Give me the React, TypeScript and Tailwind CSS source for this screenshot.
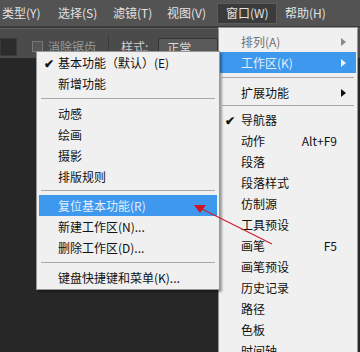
import React from 'react';

type Entry =
  | { sep: true; cls?: string }
  | { label: string; check?: boolean; active?: boolean; disabled?: boolean; sub?: boolean; key?: string };

const leftItems: Entry[] = [
  { label: '基本功能（默认）(E)', check: true },
  { label: '新增功能' },
  { sep: true },
  { label: '动感' },
  { label: '绘画' },
  { label: '摄影' },
  { label: '排版规则' },
  { sep: true, cls: 'mt-[3px] mb-[4px]' },
  { label: '复位基本功能(R)', active: true },
  { label: '新建工作区(N)...' },
  { label: '删除工作区(D)...' },
  { sep: true },
  { label: '键盘快捷键和菜单(K)...' },
];

const rightItems: Entry[] = [
  { label: '排列(A)', disabled: true, sub: true },
  { label: '工作区(K)', active: true, sub: true },
  { sep: true },
  { label: '扩展功能', sub: true },
  { sep: true, cls: 'mt-[2px] mb-[3px]' },
  { label: '导航器', check: true },
  { label: '动作', key: 'Alt+F9' },
  { label: '段落' },
  { label: '段落样式' },
  { label: '仿制源' },
  { label: '工具预设' },
  { label: '画笔', key: 'F5' },
  { label: '画笔预设' },
  { label: '历史记录' },
  { label: '路径' },
  { label: '色板' },
  { label: '时间轴' },
];

const menubar = [
  { t: '类型(Y)', w: 'w-[56px]' },
  { t: '选择(S)', w: 'w-[55px]' },
  { t: '滤镜(T)', w: 'w-[54px]' },
  { t: '视图(V)', w: 'w-[50px]' },
];

function Arrow({ color }: { color: string }) {
  return (
    <svg width="5" height="8" viewBox="0 0 5 8" className="shrink-0">
      <path d="M0 0 L5 4 L0 8 Z" fill={color} />
    </svg>
  );
}

function MenuRows({ items, textPad }: { items: Entry[]; textPad: string }) {
  return (
    <>
      {items.map((it, i) => {
        if ('sep' in it) {
          return <div key={i} className={`h-px bg-[#a8a8a8] mx-[2px] ${it.cls ?? 'my-[4px]'}`} />;
        }
        const text = it.active ? 'text-[#e6eefa]' : it.disabled ? 'text-[#707070]' : 'text-[#111]';
        return (
          <div
            key={i}
            className={`relative flex items-center h-[21px] ${textPad} pr-[10px] ${it.active ? 'bg-[#3d98ee]' : ''} ${text}`}
          >
            {it.check && <span className="absolute left-[5px] text-[12px] text-[#111] font-bold">✔</span>}
            <span className="flex-1 whitespace-nowrap">{it.label}</span>
            {it.key && <span className="whitespace-nowrap mr-[9px]">{it.key}</span>}
            {it.sub && <Arrow color={it.active ? '#eef4fc' : it.disabled ? '#8a8a8a' : '#111'} />}
          </div>
        );
      })}
    </>
  );
}

export default function App() {
  return (
    <div className="relative w-[360px] h-[352px] overflow-hidden bg-[#272727] font-['Noto_Sans_CJK_SC',sans-serif] text-[12px] leading-none">
      {/* menu bar */}
      <div className="h-[28px] bg-[#535353] border-b-2 border-[#3a3a3a] flex items-center text-[#e2e2e2] pl-[2px]">
        {menubar.map((m) => (
          <div key={m.t} className={m.w}>
            {m.t}
          </div>
        ))}
        <div className="w-[60px] h-[21px] pl-[8px] flex items-center bg-[#3b3b3b] border border-[#5c5c5c]">窗口(W)</div>
        <div className="ml-[8px]">帮助(H)</div>
      </div>

      {/* options bar */}
      <div className="h-[30px] bg-[#4b4b4b] border-t border-[#5e5e5e] flex items-center text-[#9a9a9a]">
        <div className="w-[17px] h-[18px] bg-[#2c2c2c] border border-[#3a3a3a] mt-[6px]" />
        <div className="ml-[15px] w-[11px] h-[11px] border border-[#777] bg-[#555] mt-[6px]" />
        <span className="ml-[5px] mt-[6px]">消除锯齿</span>
        <div className="ml-[12px] w-px h-[22px] bg-[#3a3a3a] mt-[6px]" />
        <span className="ml-[12px] mt-[6px] text-[#d0d0d0]">样式:</span>
        <div className="ml-[10px] w-[60px] h-[20px] bg-[#5a5a5a] border border-[#333] mt-[8px] pl-[8px] pt-[3px] text-[#ddd]">正常</div>
      </div>

      {/* 窗口 menu */}
      <div className="absolute left-[218px] top-[27px] w-[140px] h-[340px] bg-[#f0f0f0] border border-[#979797] pt-[3px] px-px">
        <MenuRows items={rightItems} textPad="pl-[21px]" />
      </div>

      {/* 工作区 submenu */}
      <div className="absolute left-[36px] top-[51px] w-[184px] bg-[#f0f0f0] border border-[#979797] px-[2px] pb-px shadow-[2px_2px_2px_rgba(0,0,0,0.35)]">
        <MenuRows items={leftItems} textPad="pl-[19px]" />
      </div>

      {/* red annotation arrow */}
      <svg className="absolute left-0 top-0 pointer-events-none" width="360" height="352">
        <line x1="200" y1="208" x2="272" y2="244" stroke="#c8202a" strokeWidth="1.2" />
        <path d="M194 205 L206 205 L200 213 Z" fill="#d4141e" />
      </svg>
    </div>
  );
}
